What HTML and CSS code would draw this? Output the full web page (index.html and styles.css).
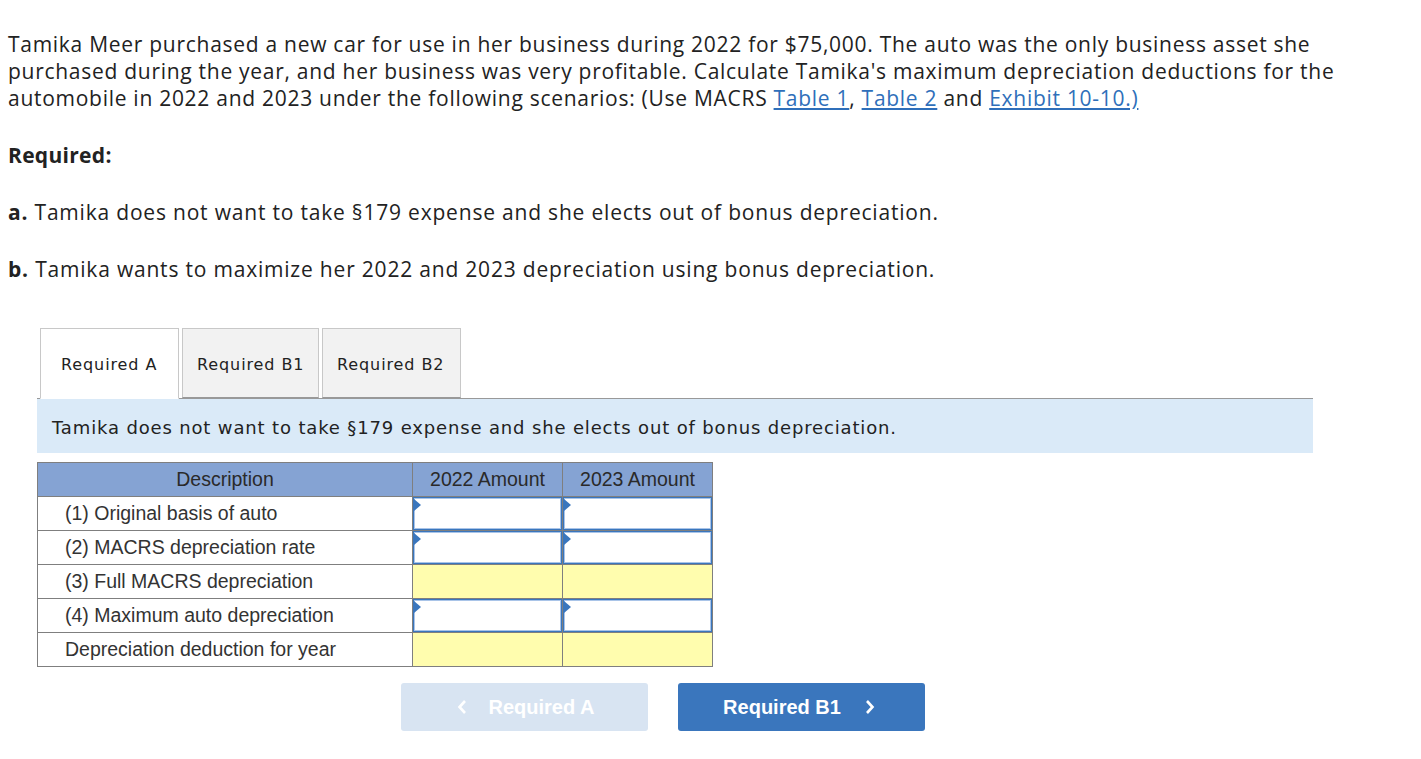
FILE: index.html
```html
<!DOCTYPE html>
<html>
<head>
<meta charset="utf-8">
<link rel="stylesheet" href="styles.css">
</head>
<body>
<div class="page">
  <p class="intro">Tamika Meer purchased a new car for use in her business during 2022 for $75,000. The auto was the only business asset she<br>purchased during the year, and her business was very profitable. Calculate Tamika's maximum depreciation deductions for the<br>automobile in 2022 and 2023 under the following scenarios: (Use MACRS <a href="#">Table 1</a>, <a href="#">Table 2</a> and <a href="#">Exhibit 10-10.)</a></p>
  <p class="req">Required:</p>
  <p class="item"><b>a.</b> Tamika does not want to take §179 expense and she elects out of bonus depreciation.</p>
  <p class="item"><b>b.</b> Tamika wants to maximize her 2022 and 2023 depreciation using bonus depreciation.</p>

  <div class="tabs">
    <div class="tab active">Required A</div>
    <div class="tab">Required B1</div>
    <div class="tab">Required B2</div>
  </div>
  <div class="banner">Tamika does not want to take §179 expense and she elects out of bonus depreciation.</div>

  <table class="grid">
    <thead>
      <tr><th class="c-desc">Description</th><th class="c-amt">2022 Amount</th><th class="c-amt">2023 Amount</th></tr>
    </thead>
    <tbody>
      <tr><td class="desc">(1) Original basis of auto</td><td class="inp"><div class="box"></div></td><td class="inp"><div class="box"></div></td></tr>
      <tr><td class="desc">(2) MACRS depreciation rate</td><td class="inp"><div class="box"></div></td><td class="inp"><div class="box"></div></td></tr>
      <tr><td class="desc">(3) Full MACRS depreciation</td><td class="calc"></td><td class="calc"></td></tr>
      <tr><td class="desc">(4) Maximum auto depreciation</td><td class="inp"><div class="box"></div></td><td class="inp"><div class="box"></div></td></tr>
      <tr><td class="desc">Depreciation deduction for year</td><td class="calc"></td><td class="calc"></td></tr>
    </tbody>
  </table>

  <div class="nav">
    <div class="btn prev"><svg class="chev left" width="10" height="16" viewBox="0 0 10 16"><path d="M8 2 L2.5 8 L8 14" fill="none" stroke="#fff" stroke-width="2.6"/></svg>Required A</div>
    <div class="btn next">Required B1<svg class="chev right" width="10" height="16" viewBox="0 0 10 16"><path d="M2 2 L7.5 8 L2 14" fill="none" stroke="#fff" stroke-width="2.6"/></svg></div>
  </div>
</div>
</body>
</html>
```

FILE: styles.css
```css
html, body { margin: 0; padding: 0; background: #fff; }
.page {
  padding: 31px 8px 0 8px;
  font-family: "Open Sans", Lato, sans-serif;
  color: #222;
}
.intro {
  margin: 0;
  font-size: 21px;
  line-height: 27px;
  letter-spacing: 0.72px;
}
.intro a { color: #2f6fba; text-decoration: underline; }
.req {
  margin: 30px 0 0 0;
  font-size: 21px;
  line-height: 27px;
  font-weight: bold;
  letter-spacing: 0.3px;
}
.item {
  margin: 30px 0 0 0;
  font-size: 21px;
  line-height: 27px;
  letter-spacing: 0.8px;
}
.item b { font-weight: bold; }

.tabs {
  display: flex;
  gap: 3px;
  margin: 45px 0 0 32px;
  position: relative;
  z-index: 1;
}
.tab {
  font-family: "DejaVu Sans", Verdana, sans-serif;
  font-size: 16px;
  letter-spacing: 0.9px;
  color: #222;
  height: 70px;
  box-sizing: border-box;
  display: flex;
  align-items: center;
  padding: 2px 0 0 14px;
  background: #f2f2f2;
  border: 1px solid #c8c8c8;
  border-bottom: 1px solid #999;
}
.tab.active {
  background: #fff;
  border-bottom: 1px solid #fff;
  height: 71px;
  width: 139px;
  padding-left: 20px;
  padding-top: 1px;
}
.tab:nth-child(2) { width: 137px; }
.tab:nth-child(3) { width: 139px; }
.banner {
  margin: -1px 0 0 29px;
  width: 1276px;
  height: 55px;
  box-sizing: border-box;
  border-top: 1px solid #999;
  background: #daeaf8;
  font-family: "DejaVu Sans", Verdana, sans-serif;
  font-size: 18px;
  letter-spacing: 0.85px;
  color: #222;
  display: flex;
  align-items: center;
  padding: 2px 0 0 15px;
}

.grid {
  margin: 9px 0 0 29px;
  border-collapse: collapse;
  font-family: "Liberation Sans", Arial, sans-serif;
  font-size: 19.5px;
  color: #333;
}
.grid th {
  background: #85a3d3;
  font-weight: normal;
  height: 33px;
  padding: 0;
  border: 1px solid #7f7f7f;
  color: #2a2a2a;
}
.grid th.c-desc { width: 374px; }
.grid th.c-amt { width: 149px; }
.grid td {
  border: 1px solid #7f7f7f;
  height: 33px;
  padding: 0;
}
.grid td.desc { padding-left: 27px; }
.grid td.calc { background: #fffdae; }
.grid td.inp { position: relative; }
.box {
  position: absolute;
  inset: 0;
  border: 1px solid #3a76bd;
  box-shadow: inset 0 0 0 1px #a9c4e8;
  background: #fff;
}
.box::before {
  content: "";
  position: absolute;
  left: 0;
  top: 1px;
  border-top: 6px solid transparent;
  border-bottom: 6px solid transparent;
  border-left: 7px solid #3a76bd;
}

.nav {
  display: flex;
  gap: 30px;
  margin: 16px 0 0 393px;
}
.btn {
  width: 247px;
  height: 48px;
  border-radius: 3px;
  display: flex;
  align-items: center;
  justify-content: center;
  font-family: "Liberation Sans", Arial, sans-serif;
  font-weight: bold;
  font-size: 20px;
  color: #fff;
}
.btn.prev { background: #d8e4f2; }
.btn.next { background: #3a76bd; padding-right: 5px; box-sizing: border-box; }
.chev { display: block; }
.chev.left { margin-right: 22px; margin-left: 2px; }
.chev.right { margin-left: 24px; }
```
